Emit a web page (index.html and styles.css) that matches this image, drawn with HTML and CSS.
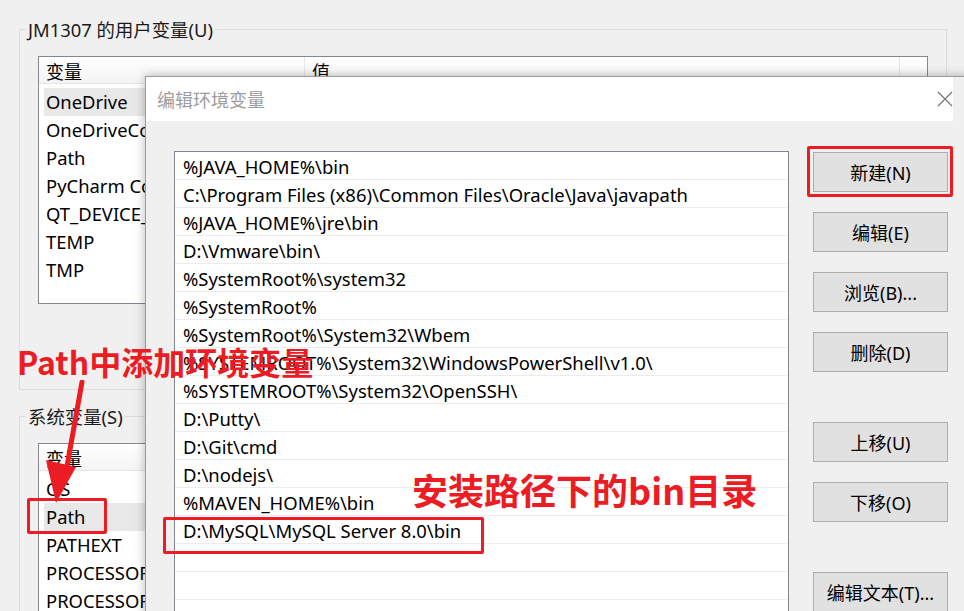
FILE: index.html
```html
<!DOCTYPE html>
<html lang="zh-CN">
<head>
<meta charset="utf-8">
<title>编辑环境变量</title>
<link rel="stylesheet" href="styles.css">
</head>
<body>
<div class="window">
  <div class="group">
    <div class="group-label">JM1307 的用户变量(U)</div>
    <div class="varlist user-list">
      <div class="varlist-head"><span class="col-name">变量</span><span class="col-value">值</span><span class="col-end"></span></div>
      <div class="varlist-rows">
        <div class="vrow selected">OneDrive</div>
        <div class="vrow">OneDriveConsumer</div>
        <div class="vrow">Path</div>
        <div class="vrow">PyCharm Community Edition</div>
        <div class="vrow">QT_DEVICE_PIXEL_RATIO</div>
        <div class="vrow">TEMP</div>
        <div class="vrow">TMP</div>
      </div>
    </div>
  </div>
  <div class="group group-sys">
    <div class="group-label">系统变量(S)</div>
    <div class="varlist sys-list">
      <div class="varlist-head"><span class="col-name">变量</span><span class="col-value">值</span><span class="col-end"></span></div>
      <div class="varlist-rows">
        <div class="vrow">OS</div>
        <div class="vrow selected">Path</div>
        <div class="vrow">PATHEXT</div>
        <div class="vrow">PROCESSOR_ARCHITECTURE</div>
        <div class="vrow">PROCESSOR_IDENTIFIER</div>
      </div>
    </div>
  </div>
</div>

<div class="dialog">
  <div class="dialog-title">
    <span class="title-text">编辑环境变量</span>
    <svg class="close-icon" width="16" height="16" viewBox="0 0 16 16"><path d="M1 1 L15 15 M15 1 L1 15" stroke="#707070" stroke-width="1.1" fill="none"/></svg>
  </div>
  <div class="dialog-body">
    <div class="pathlist">
      <div class="prow">%JAVA_HOME%\bin</div>
      <div class="prow">C:\Program Files (x86)\Common Files\Oracle\Java\javapath</div>
      <div class="prow">%JAVA_HOME%\jre\bin</div>
      <div class="prow">D:\Vmware\bin\</div>
      <div class="prow">%SystemRoot%\system32</div>
      <div class="prow">%SystemRoot%</div>
      <div class="prow">%SystemRoot%\System32\Wbem</div>
      <div class="prow">%SYSTEMROOT%\System32\WindowsPowerShell\v1.0\</div>
      <div class="prow">%SYSTEMROOT%\System32\OpenSSH\</div>
      <div class="prow">D:\Putty\</div>
      <div class="prow">D:\Git\cmd</div>
      <div class="prow">D:\nodejs\</div>
      <div class="prow">%MAVEN_HOME%\bin</div>
      <div class="prow">D:\MySQL\MySQL Server 8.0\bin</div>
      <div class="prow"></div>
      <div class="prow"></div>
    </div>
    <div class="buttons">
      <div class="btn">新建(N)</div>
      <div class="btn">编辑(E)</div>
      <div class="btn">浏览(B)...</div>
      <div class="btn">删除(D)</div>
      <div class="btn btn-gap">上移(U)</div>
      <div class="btn">下移(O)</div>
      <div class="btn btn-gap">编辑文本(T)...</div>
    </div>
  </div>
</div>

<div class="mark mark-new"></div>
<div class="mark mark-path"></div>
<div class="mark mark-mysql"></div>
<div class="note note-path">Path中添加环境变量</div>
<div class="note note-bin">安装路径下的bin目录</div>
<svg class="arrow" width="100" height="140" viewBox="0 0 100 140">
  <path d="M82 2 L66 92" stroke="#ec1c24" stroke-width="5" stroke-linecap="round" fill="none"/>
  <path d="M46 80 L76 87 L56 123 Z" fill="#ec1c24"/>
</svg>
</body>
</html>
```

FILE: styles.css
```css
html, body {
  margin: 0;
  padding: 0;
}
body {
  width: 964px;
  height: 611px;
  overflow: hidden;
  background: #f0f0f0;
  font-family: "Noto Sans", "Noto Sans CJK SC", sans-serif;
  font-size: 18px;
  color: #000;
  position: relative;
}

.window {
  padding-top: 29px;
}
.group {
  margin: 0 17px 0 19px;
  border: 1px solid #dcdcdc;
  padding: 0 18px 85px 18px;
}
.group-sys {
  margin-top: 26px;
  padding-bottom: 200px;
}
.group-label {
  display: table;
  margin: -11px 0 0 -12px;
  padding: 0 2px;
  height: 22px;
  line-height: 22px;
  font-size: 18.4px;
  background: #f0f0f0;
  color: #1a1a1a;
}
.varlist {
  margin-top: 15px;
  border: 1px solid #828790;
  background: #fff;
  height: 246px;
  overflow: hidden;
}
.varlist-head {
  display: flex;
  height: 27px;
  background: linear-gradient(#ffffff, #f4f4f4);
  border-bottom: 1px solid #e5e5e5;
  box-sizing: border-box;
}
.varlist-head span {
  padding: 0 0 0 7px;
  line-height: 30px;
  box-sizing: border-box;
}
.col-name {
  width: 266px;
  border-right: 1px solid #e5e5e5;
}
.col-value {
  width: 595px;
  border-right: 1px solid #e5e5e5;
}
.col-end {
  flex: 1;
}
.varlist-rows {
  padding: 4px 5px 0 5px;
}
.vrow {
  height: 28px;
  line-height: 28px;
  padding-left: 2px;
  font-size: 18.4px;
  white-space: nowrap;
  overflow: hidden;
}
.vrow.selected {
  background: #e8e8e8;
}

.dialog {
  position: absolute;
  left: 145px;
  top: 76px;
  width: 840px;
  height: 560px;
  border: 1px solid #9a9a9a;
  background: #f0f0f0;
  box-shadow: 0 0 10px rgba(0, 0, 0, 0.28);
}
.dialog-title {
  height: 44px;
  background: #fff;
  display: flex;
  align-items: center;
  padding: 0 0 0 11px;
  width: 796px;
}
.title-text {
  color: #9c9c9c;
  flex: 1;
}
.close-icon {
  display: block;
}
.dialog-body {
  display: flex;
  align-items: flex-start;
  padding: 30px 0 0 28px;
}
.pathlist {
  width: 613px;
  height: 520px;
  border: 1px solid #828790;
  background: #fff;
}
.prow {
  height: 28px;
  line-height: 29px;
  padding-left: 8px;
  font-size: 18.45px;
  border-bottom: 1px solid #ececec;
  box-sizing: border-box;
  white-space: nowrap;
}
.buttons {
  margin-left: 24px;
  padding-top: 1px;
  display: flex;
  flex-direction: column;
  gap: 20px;
}
.btn {
  width: 135px;
  height: 40px;
  box-sizing: border-box;
  border: 1px solid #adadad;
  background: #e1e1e1;
  display: flex;
  align-items: center;
  justify-content: center;
}
.btn-gap {
  margin-top: 30px;
}

.mark {
  position: absolute;
  border: 3px solid #ec1c24;
  border-radius: 2px;
  box-sizing: border-box;
}
.mark-new {
  left: 807px;
  top: 146px;
  width: 146px;
  height: 51px;
}
.mark-path {
  left: 27px;
  top: 498px;
  width: 80px;
  height: 36px;
}
.mark-mysql {
  left: 163px;
  top: 517px;
  width: 321px;
  height: 37px;
}
.note {
  position: absolute;
  color: #ec1c24;
  font-family: "Noto Sans CJK SC", sans-serif;
  font-weight: 700;
  white-space: nowrap;
  line-height: 1;
}
.note-path {
  left: 17px;
  top: 345px;
  font-size: 32px;
}
.note-bin {
  left: 412px;
  top: 471px;
  font-size: 36px;
}
.arrow {
  position: absolute;
  left: 0;
  top: 380px;
}
```
